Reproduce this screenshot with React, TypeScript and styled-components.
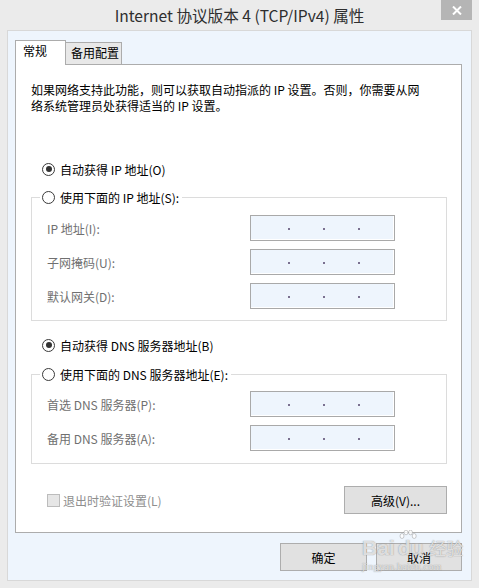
import React from "react";
import styled, { createGlobalStyle } from "styled-components";

const Global = createGlobalStyle`
  html, body { margin: 0; padding: 0; background: #ebebeb; }
  body {
    font-family: "Microsoft YaHei", "Noto Sans CJK SC", "Noto Sans", sans-serif;
    font-size: 12px;
    color: #000;
  }
  * { box-sizing: border-box; }
`;

const Window = styled.div`
  width: 479px;
  height: 588px;
  display: flex;
  flex-direction: column;
  background: #ebebeb;
  position: relative;
  overflow: hidden;
`;

const TitleBar = styled.div`
  height: 30px;
  flex: none;
  display: grid;
  grid-template-columns: 1fr auto 1fr;
  align-items: start;
`;

const Title = styled.div`
  grid-column: 2;
  font-size: 15.6px;
  line-height: 31px;
  color: #2e2e2e;
  white-space: nowrap;
`;

const CloseButton = styled.div`
  grid-column: 3;
  justify-self: end;
  margin-right: 7px;
  width: 31px;
  height: 20px;
  background: #b5b5b5;
  display: flex;
  align-items: center;
  justify-content: center;
  padding-top: 1px;
`;

const Client = styled.div`
  flex: 1;
  margin: 0 7px 7px 7px;
  background: #eef5fd;
  border: 1px solid #d8d8d8;
  padding: 9px 9px 0 7px;
  display: flex;
  flex-direction: column;
`;

const TabRow = styled.div`
  display: flex;
  align-items: flex-end;
  height: 24px;
`;

const Tab = styled.div<{ $active?: boolean }>`
  position: relative;
  z-index: ${(p) => (p.$active ? 1 : 0)};
  height: ${(p) => (p.$active ? "25px" : "22px")};
  margin-bottom: ${(p) => (p.$active ? "-1px" : "0")};
  width: ${(p) => (p.$active ? "51px" : "56px")};
  padding: 2px 0 0 ${(p) => (p.$active ? "7px" : "5px")};
  line-height: 16px;
  background: ${(p) => (p.$active ? "#ffffff" : "#e8e8e8")};
  border: 1px solid #acacac;
  border-bottom: none;
  border-left: ${(p) => (p.$active ? "1px solid #acacac" : "none")};
  white-space: nowrap;
`;

const Panel = styled.div`
  background: #fff;
  border: 1px solid #acacac;
  padding: 17px 14px 18px 15px;
  display: flex;
  flex-direction: column;
`;

const Desc = styled.div`
  line-height: 16px;
  white-space: nowrap;
`;

const RadioRow = styled.div<{ $mt?: number }>`
  display: flex;
  align-items: center;
  height: 20px;
  margin-top: ${(p) => p.$mt ?? 0}px;
  padding-left: 11px;
  gap: 5px;
  white-space: nowrap;
`;

const RadioCircle = styled.span<{ $checked?: boolean }>`
  width: 13px;
  height: 13px;
  border-radius: 50%;
  border: 1px solid #3a3a3a;
  background: #fff;
  display: inline-flex;
  align-items: center;
  justify-content: center;
  flex: none;
  &::after {
    content: "";
    width: 6px;
    height: 6px;
    border-radius: 50%;
    background: ${(p) => (p.$checked ? "#333" : "transparent")};
  }
`;

const Group = styled.div<{ $mt: number; $pb: number }>`
  margin-top: ${(p) => p.$mt}px;
  border: 1px solid #dcdcdc;
  padding: 0 0 ${(p) => p.$pb}px 15px;
`;

const Legend = styled.div`
  display: flex;
  align-items: center;
  gap: 5px;
  height: 20px;
  width: max-content;
  margin: -11px 0 0 -7px;
  padding: 0 3px 0 2px;
  background: #fff;
  white-space: nowrap;
`;

const FieldGrid = styled.div<{ $mt: number }>`
  margin-top: ${(p) => p.$mt}px;
  display: grid;
  grid-template-columns: 203px 145px;
  grid-auto-rows: 26px;
  row-gap: 8px;
  align-items: center;
`;

const FieldLabel = styled.div`
  color: #707070;
  white-space: nowrap;
  text-shadow: 1px 1px 0 #ffffff;
`;

const IpBox = styled.div`
  height: 26px;
  width: 145px;
  border: 1px solid #a9a9a9;
  background: #eef5fd;
  box-shadow: inset -1px -1px 0 #ffffff;
  display: flex;
  align-items: center;
  padding: 1px 0 0 37px;
  gap: 33px;
`;

const IpDot = styled.span`
  width: 2px;
  height: 2px;
  background: #7a7090;
  flex: none;
`;

const FooterRow = styled.div`
  margin-top: 22px;
  display: flex;
  align-items: center;
  justify-content: space-between;
  padding-left: 16px;
`;

const CheckLabel = styled.div`
  display: flex;
  align-items: center;
  gap: 3px;
  color: #8e8e8e;
  white-space: nowrap;
`;

const CheckBox = styled.span`
  width: 13px;
  height: 13px;
  border: 1px solid #bcbcbc;
  background: #e6e6e6;
  flex: none;
`;

const Button = styled.div<{ $w: number }>`
  width: ${(p) => p.$w}px;
  height: 28px;
  border: 1px solid #adadad;
  background: #e1e1e1;
  display: flex;
  align-items: center;
  justify-content: center;
  white-space: nowrap;
`;

const ButtonRow = styled.div`
  margin-top: 10px;
  display: flex;
  justify-content: flex-end;
  gap: 9px;
`;

const Watermark = styled.div`
  position: absolute;
  left: 362px;
  top: 533px;
  pointer-events: none;
  display: flex;
  flex-direction: column;
  align-items: flex-start;
  font-family: "Liberation Sans", Arial, sans-serif;
  color: rgba(255, 255, 255, 0.7);
  text-shadow: 0 0 1px rgba(120, 120, 120, 0.5), 0 0 1px rgba(120, 120, 120, 0.5);
`;

const WmMain = styled.div`
  display: flex;
  align-items: flex-end;
  font-size: 21px;
  font-weight: bold;
  line-height: 30px;
`;

const WmDu = styled.span`
  position: relative;
  margin-left: 3px;
`;

const WmPaw = styled.svg`
  position: absolute;
  left: 1px;
  top: -3px;
`;

const WmCn = styled.span`
  font-family: "Noto Sans CJK SC", sans-serif;
  font-size: 17px;
  font-weight: normal;
  margin-left: 6px;
`;

const WmUrl = styled.div`
  font-family: "Liberation Serif", serif;
  font-size: 10px;
  line-height: 10px;
  margin-top: -1px;
  letter-spacing: 0.3px;
`;

function IpField() {
  return (
    <IpBox>
      <IpDot />
      <IpDot />
      <IpDot />
    </IpBox>
  );
}

export default function App() {
  return (
    <>
      <Global />
      <Window>
        <TitleBar>
          <Title>Internet 协议版本 4 (TCP/IPv4) 属性</Title>
          <CloseButton>
            <svg width="10" height="9" viewBox="0 0 10 9">
              <path d="M1 0.5 L9 8.5 M9 0.5 L1 8.5" stroke="#fff" strokeWidth="2" />
            </svg>
          </CloseButton>
        </TitleBar>
        <Client>
          <TabRow>
            <Tab $active>常规</Tab>
            <Tab>备用配置</Tab>
          </TabRow>
          <Panel>
            <Desc>
              如果网络支持此功能，则可以获取自动指派的 IP 设置。否则，你需要从网
              <br />
              络系统管理员处获得适当的 IP 设置。
            </Desc>
            <RadioRow $mt={45}>
              <RadioCircle $checked />
              自动获得 IP 地址(O)
            </RadioRow>
            <Group $mt={18} $pb={11}>
              <Legend>
                <RadioCircle />
                使用下面的 IP 地址(S):
              </Legend>
              <FieldGrid $mt={8}>
                <FieldLabel>IP 地址(I):</FieldLabel>
                <IpField />
                <FieldLabel>子网掩码(U):</FieldLabel>
                <IpField />
                <FieldLabel>默认网关(D):</FieldLabel>
                <IpField />
              </FieldGrid>
            </Group>
            <RadioRow $mt={14}>
              <RadioCircle $checked />
              自动获得 DNS 服务器地址(B)
            </RadioRow>
            <Group $mt={19} $pb={12}>
              <Legend>
                <RadioCircle />
                使用下面的 DNS 服务器地址(E):
              </Legend>
              <FieldGrid $mt={7}>
                <FieldLabel>首选 DNS 服务器(P):</FieldLabel>
                <IpField />
                <FieldLabel>备用 DNS 服务器(A):</FieldLabel>
                <IpField />
              </FieldGrid>
            </Group>
            <FooterRow>
              <CheckLabel>
                <CheckBox />
                退出时验证设置(L)
              </CheckLabel>
              <Button $w={103}>高级(V)...</Button>
            </FooterRow>
          </Panel>
          <ButtonRow>
            <Button $w={87}>确定</Button>
            <Button $w={86}>取消</Button>
          </ButtonRow>
        </Client>
        <Watermark>
          <WmMain>
            Bai
            <WmDu>
              <WmPaw width="18" height="12" viewBox="0 0 18 12">
                <g fill="rgba(255,255,255,0.8)" stroke="rgba(130,130,130,0.5)" strokeWidth="0.8">
                  <ellipse cx="3" cy="6" rx="2" ry="2.5" />
                  <ellipse cx="7" cy="2.5" rx="2" ry="2.3" />
                  <ellipse cx="11.5" cy="2.5" rx="2" ry="2.3" />
                  <ellipse cx="15.2" cy="6" rx="2" ry="2.5" />
                </g>
              </WmPaw>
              du
            </WmDu>
            <WmCn>经验</WmCn>
          </WmMain>
          <WmUrl>jingyan.baidu.com</WmUrl>
        </Watermark>
      </Window>
    </>
  );
}
